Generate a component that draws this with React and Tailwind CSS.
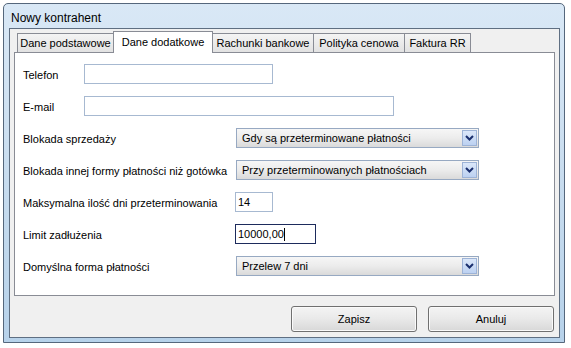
function Chevron() {
  return (
    <svg width="9" height="6" viewBox="0 0 9 6" className="block">
      <path d="M1 1 L4.5 4.5 L8 1" fill="none" stroke="#1a2f6e" strokeWidth="2" />
    </svg>
  );
}

function Select({ value }) {
  return (
    <div className="w-[243px] h-[20px] border border-[#97a9c2] bg-gradient-to-b from-[#f6f6f6] via-[#ececec] to-[#dadada] flex items-center justify-between">
      <span className="pl-[5px] leading-none">{value}</span>
      <div className="w-[15px] h-[16px] mr-[1px] border border-[#9db3d6] bg-gradient-to-b from-[#dbe7f9] to-[#bcd1f1] flex items-center justify-center">
        <Chevron />
      </div>
    </div>
  );
}

function TextInput({ w, value, focused }) {
  return (
    <div
      className={
        "h-[20px] bg-white flex items-center pl-[2px] " +
        w +
        (focused ? " border border-[#1d2b5c]" : " border border-[#a7b9d1]")
      }
    >
      {value && <span className="leading-none">{value}</span>}
      {focused && <span className="w-px h-[13px] bg-black"></span>}
    </div>
  );
}

function Row({ label, lw, children }) {
  return (
    <div className="flex items-center h-[20px]">
      <span className={"shrink-0 pt-[3px] " + lw}>{label}</span>
      {children}
    </div>
  );
}

export default function App() {
  return (
    <div className="w-[571px] h-[348px] bg-white pl-[3px] pt-[3px] font-['Liberation_Sans',Arial,sans-serif] text-[11px] text-black">
      <div className="w-[562px] h-[340px] border border-[#55677c] rounded-t-[5px] bg-gradient-to-b from-[#d9e8f6] via-[#c9ddef] to-[#b7d2ea] flex flex-col">
        <div className="h-[24px] shrink-0 flex items-center pl-[7px] pt-[3px] text-[12px] text-black">
          Nowy kontrahent
        </div>
        <div className="ml-[5px] mr-[4px] h-[310px] border border-[#5f6f82] bg-[#f0f0f0] flex flex-col pt-[2px]">
          <div className="h-[22px] flex items-end pl-[7px]">
            <div className="w-[96px] h-[20px] border border-[#898c95] border-r-0 bg-gradient-to-b from-[#f4f4f4] to-[#e2e2e2] flex items-center justify-center">
              Dane podstawowe
            </div>
            <div className="relative z-10 w-[100px] h-[22px] border border-b-0 border-[#898c95] bg-white flex items-center justify-center pb-[1px]">
              Dane dodatkowe
            </div>
            <div className="w-[101px] h-[20px] border border-l-0 border-[#898c95] bg-gradient-to-b from-[#f4f4f4] to-[#e2e2e2] flex items-center justify-center">
              Rachunki bankowe
            </div>
            <div className="w-[91px] h-[20px] border border-l-0 border-[#898c95] bg-gradient-to-b from-[#f4f4f4] to-[#e2e2e2] flex items-center justify-center">
              Polityka cenowa
            </div>
            <div className="w-[66px] h-[20px] border border-l-0 border-[#898c95] bg-gradient-to-b from-[#f4f4f4] to-[#e2e2e2] flex items-center justify-center">
              Faktura RR
            </div>
          </div>
          <div className="-mt-px ml-[4px] w-[541px] h-[244px] border border-[#898c95] bg-white flex flex-col gap-[12px] pt-[11px] pl-[8px]">
            <Row label="Telefon" lw="w-[61px]">
              <TextInput w="w-[189px]" />
            </Row>
            <Row label="E-mail" lw="w-[61px]">
              <TextInput w="w-[310px]" />
            </Row>
            <Row label="Blokada sprzedaży" lw="w-[213px]">
              <Select value="Gdy są przeterminowane płatności" />
            </Row>
            <Row label="Blokada innej formy płatności niż gotówka" lw="w-[213px]">
              <Select value="Przy przeterminowanych płatnościach" />
            </Row>
            <Row label="Maksymalna ilość dni przeterminowania" lw="w-[212px]">
              <TextInput w="w-[38px]" value="14" />
            </Row>
            <Row label="Limit zadłużenia" lw="w-[212px]">
              <TextInput w="w-[81px]" value="10000,00" focused />
            </Row>
            <Row label="Domyślna forma płatności" lw="w-[213px]">
              <Select value="Przelew 7 dni" />
            </Row>
          </div>
          <div className="mt-[10px] flex justify-end gap-[11px] pr-[5px]">
            <button className="w-[126px] h-[26px] rounded-[3px] border border-[#707070] bg-gradient-to-b from-[#f4f4f4] via-[#e9e9e9] to-[#d8d8d8] text-[11px] shadow-[inset_0_0_0_1px_#fafafa]">
              Zapisz
            </button>
            <button className="w-[126px] h-[26px] rounded-[3px] border border-[#707070] bg-gradient-to-b from-[#f4f4f4] via-[#e9e9e9] to-[#d8d8d8] text-[11px] shadow-[inset_0_0_0_1px_#fafafa]">
              Anuluj
            </button>
          </div>
        </div>
      </div>
    </div>
  );
}
